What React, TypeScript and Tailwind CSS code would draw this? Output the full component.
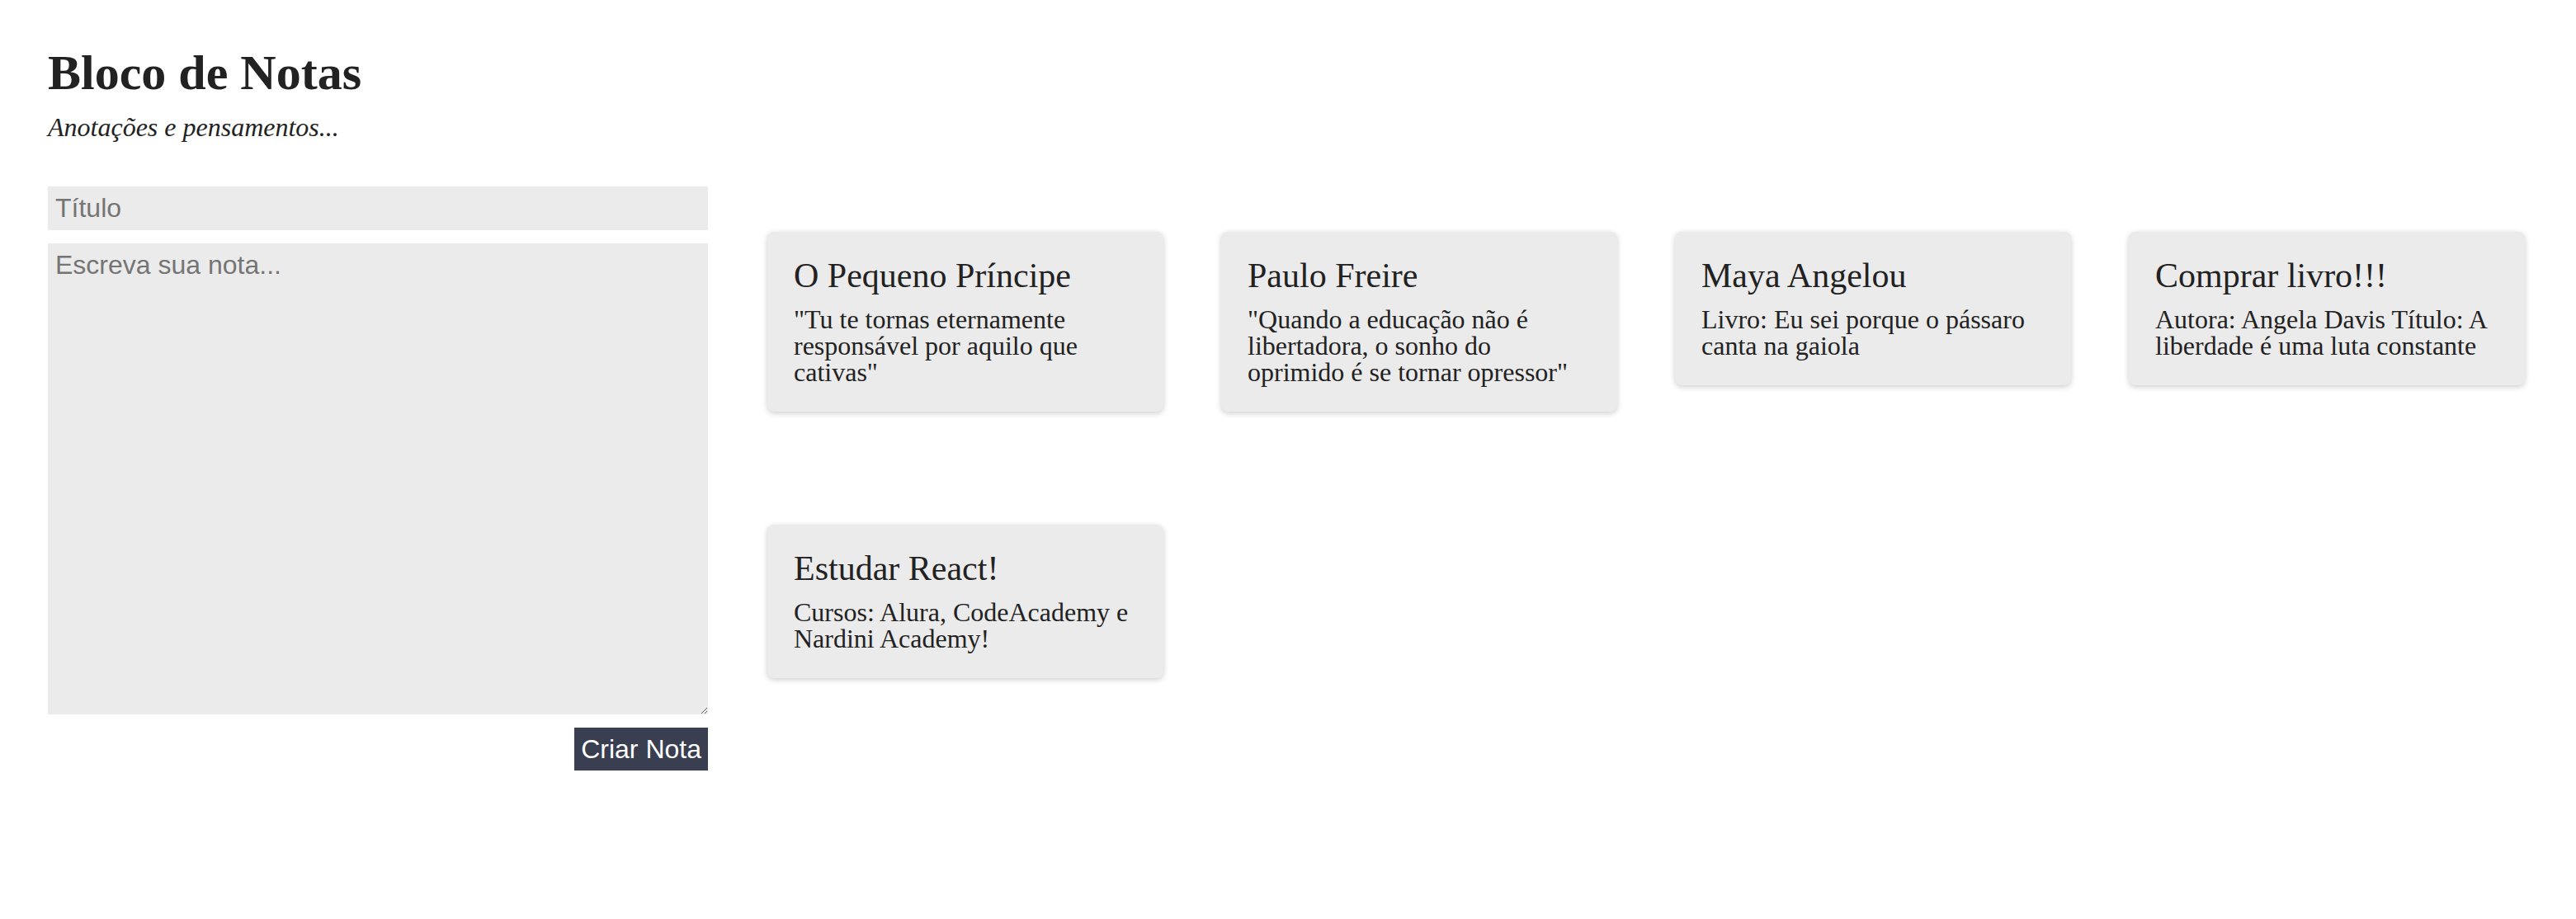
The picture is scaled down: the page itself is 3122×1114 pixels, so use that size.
import React from "react"

type Note = {
  titulo: string
  texto: string
}

const notas: Note[] = [
  { titulo: "O Pequeno Príncipe", texto: "\"Tu te tornas eternamente responsável por aquilo que cativas\"" },
  { titulo: "Paulo Freire", texto: "\"Quando a educação não é libertadora, o sonho do oprimido é se tornar opressor\"" },
  { titulo: "Maya Angelou", texto: "Livro: Eu sei porque o pássaro canta na gaiola" },
  { titulo: "Comprar livro!!!", texto: "Autora: Angela Davis Título: A liberdade é uma luta constante" },
  { titulo: "Estudar React!", texto: "Cursos: Alura, CodeAcademy e Nardini Academy!" },
]

function CardNota({ nota }: { nota: Note }) {
  return (
    <li className="w-[480px] rounded-lg bg-[#ebebeb] p-8 shadow-[0_2px_7px_rgba(0,0,0,0.2)]">
      <h3 className="mb-4 text-[42px] leading-[42px] text-[#222]">{nota.titulo}</h3>
      <p className="text-[32px] leading-[32px] text-[#222]">{nota.texto}</p>
    </li>
  )
}

function FormCadastro() {
  return (
    <form className="flex w-[800px] shrink-0 flex-col gap-4 font-['Liberation_Sans',sans-serif]">
      <input
        type="text"
        placeholder="Título"
        className="h-[53px] bg-[#ebebeb] px-[9px] py-2 text-[32px] leading-[1.15] text-[#222] outline-none placeholder:text-[#757575]"
      />
      <textarea
        placeholder="Escreva sua nota..."
        className="h-[571px] resize bg-[#ebebeb] px-[9px] py-2 text-[32px] leading-[1.15] text-[#222] outline-none placeholder:text-[#757575]"
      />
      <div className="flex justify-end">
        <button type="button" className="h-[52px] bg-[#393e50] px-2 text-[32px] leading-[1.15] text-white">
          Criar Nota
        </button>
      </div>
    </form>
  )
}

export default function App() {
  return (
    <div className="min-h-screen bg-white px-[58px] pt-[54px] font-['Liberation_Serif',serif] text-[#222]">
      <header>
        <h1 className="text-[60px] font-bold leading-[69px]">Bloco de Notas</h1>
        <p className="mt-[13px] text-[32px] italic leading-[37px]">Anotações e pensamentos...</p>
      </header>
      <section className="mt-[53px] flex items-start">
        <FormCadastro />
        <ul className="ml-[72px] mt-[55px] grid grid-cols-[repeat(4,480px)] items-start gap-x-[70px] gap-y-[137px]">
          {notas.map((nota) => (
            <CardNota key={nota.titulo} nota={nota} />
          ))}
        </ul>
      </section>
    </div>
  )
}
